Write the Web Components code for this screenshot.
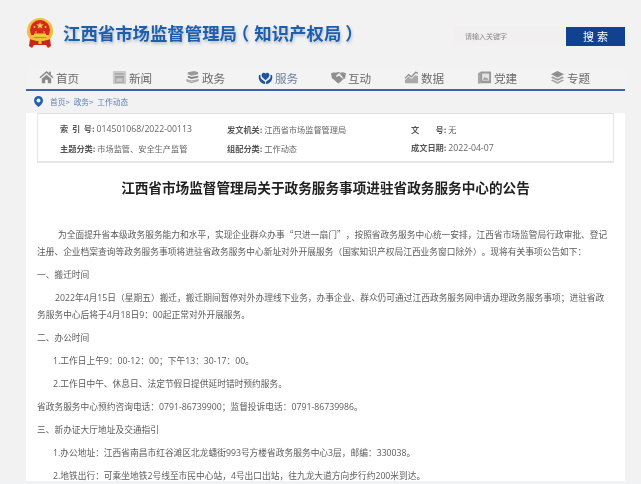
<!DOCTYPE html>
<html lang="zh-CN">
<head>
<meta charset="utf-8">
<title>江西省市场监督管理局</title>
<style>
  html, body { margin: 0; height: 484px; overflow: hidden; background: #eef3f8; }
  body { font-family: "Noto Sans CJK SC", "Liberation Sans", sans-serif; text-spacing-trim: space-all; }
  .cjk { font-family: "Noto Sans CJK SC", sans-serif; }
</style>
</head>
<body>
<site-page>
  <site-header></site-header>
  <site-nav>
    <nav-item label="首页" icon="home"></nav-item>
    <nav-item label="新闻" icon="news"></nav-item>
    <nav-item label="政务" icon="books"></nav-item>
    <nav-item label="服务" icon="care" active></nav-item>
    <nav-item label="互动" icon="hands"></nav-item>
    <nav-item label="数据" icon="chart"></nav-item>
    <nav-item label="党建" icon="album"></nav-item>
    <nav-item label="专题" icon="layers"></nav-item>
  </site-nav>
  <bread-crumb></bread-crumb>
  <article-card>
    <info-box></info-box>
    <h1>江西省市场监督管理局关于政务服务事项进驻省政务服务中心的公告</h1>
    <article-para indent="21">为全面提升省本级政务服务能力和水平，实现企业群众办事<span class="cjk">“只进一扇门”</span>，按照省政务服务中心统一安排，江西省市场监管局行政审批、登记<br>注册、企业档案查询等政务服务事项将进驻省政务服务中心新址对外开展服务（国家知识产权局江西业务窗口除外）。现将有关事项公告如下：</article-para>
    <article-para>一、搬迁时间</article-para>
    <article-para indent="18">2022年4月15日（星期五）搬迁，搬迁期间暂停对外办理线下业务，办事企业、群众仍可通过江西政务服务网申请办理政务服务事项；进驻省政<br>务服务中心后将于4月18日9：00起正常对外开展服务。</article-para>
    <article-para>二、办公时间</article-para>
    <article-para indent="16">1.工作日上午9：00-12：00；下午13：30-17：00。</article-para>
    <article-para indent="16">2.工作日中午、休息日、法定节假日提供延时错时预约服务。</article-para>
    <article-para>省政务服务中心预约咨询电话：0791-86739900；监督投诉电话：0791-86739986。</article-para>
    <article-para>三、新办证大厅地址及交通指引</article-para>
    <article-para indent="16">1.办公地址：江西省南昌市红谷滩区北龙蟠街993号方楼省政务服务中心3层，邮编：330038。</article-para>
    <article-para indent="16">2.地铁出行：可乘坐地铁2号线至市民中心站，4号出口出站，往九龙大道方向步行约200米到达。</article-para>
  </article-card>
</site-page>

<script>
const ICONS = {
  home: `<path fill="#8a8a8a" d="M8 1 .5 7.6l1 1.1L8 3.2l6.500 5.500 1-1.100L12.600 5V1.800h-2v1.500zM3 9.200V14h3.600v-3.600h2.800V14H13V9.200L8 5z"/>`,
  news: `<rect x="1" y="1" width="14" height="14" rx="1" fill="#cacaca"/><rect x="3" y="3.500" width="10" height="1.500" fill="#a2a2a2"/><path fill="none" stroke="#a2a2a2" stroke-width="1.200" d="M4 7h8v6H4z"/><rect x="4" y="7" width="8" height="1.800" fill="#a2a2a2"/>`,
  books: `<path fill="#9a9a9a" d="M3 2.500 10 1l4 1.500v2L7 6 3 4.500z"/><path fill="#7f7f7f" d="M3 6.200 7 7.500l7-1.500v2L7 9.500 3 8z"/><path fill="#a8a8a8" d="M1.500 9.500l5.500 1.700 7.500-1.700v2.200L7 14l-5.500-1.800z"/><path fill="#dcdcdc" d="M3 11l4 1.200 5-1-5 1.700z"/>`,
  care: `<path fill="#1f559f" d="M8 11 4.600 7.600C3 6 4 3 6.200 3 7 3 7.600 3.400 8 4c.4-.6 1-1 1.800-1C12 3 13 6 11.400 7.600z"/><path fill="#1f559f" d="M.8 6.200C.3 9.800 2 13 5 14.500c1 .5 2 .5 2.500.3v-2.400L4 9.800C2.800 8.800 2.500 7.200 2.600 5.200 1.700 5 1 5.400.800 6.200zM15.200 6.200c.5 3.600-1.200 6.800-4.200 8.300-1 .5-2 .5-2.500.3v-2.400L12 9.800c1.200-1 1.500-2.600 1.400-4.600.9-.2 1.600.2 1.800 1z"/>`,
  hands: `<path fill="#8f8f8f" d="M0 3.500 3.500 2.500l1 .5L8 2l2 .8L12.500 2.500 16 3.500l-1 5.500-1.500.4-5 4.600c-.8.500-1.500.2-1.800-.3L3 10 1 8.800z"/><path fill="#f2f2f2" d="M8 3.600 5.500 6c-.5.800.5 1.600 1.300 1.100L8.600 5.800l3.600 3.300.8-.7L9.400 3.800z"/>`,
  chart: `<path fill="#a9a9a9" d="M1 14V11l4-4 3 2.500 4-4 3 1V14z"/><path fill="none" stroke="#8a8a8a" stroke-width="1.300" d="M1 9l4-4 3 2.500L12.500 2.500 15 3.500"/>`,
  album: `<path fill="#a9a9a9" d="M1 3.200 4 2v12l-3 1z"/><rect x="3.500" y="1.500" width="11.500" height="12.500" rx=".6" fill="#9a9a9a"/><rect x="5.500" y="3.800" width="7.500" height="7.500" fill="#e4e4e4"/><path fill="#9a9a9a" d="M6.200 10.500 8.400 7.500l1.500 1.600 1-.8 1.400 2.200z"/>`,
  layers: `<path fill="#8f8f8f" d="M8 1 15 4.500 8 8 1 4.500z"/><path fill="#9c9c9c" d="M3 6.800 8 9.300l5-2.500 2 1.100-7 3.500-7-3.500z"/><path fill="#a8a8a8" d="M3 10.200 8 12.700l5-2.500 2 1.100-7 3.500-7-3.500z"/>`
};

const pageTemplate = document.createElement("template");
pageTemplate.innerHTML = `
  <style>
    :host { display: block; width: 641px; height: 481px; overflow: hidden; background: #f2f2f2; filter: blur(.35px); }
  </style>
  <slot></slot>
`;
class SitePage extends HTMLElement {
  constructor() {
    super();
    this.attachShadow({ mode: "open" }).appendChild(pageTemplate.content.cloneNode(true));
  }
}

const headerTemplate = document.createElement("template");
headerTemplate.innerHTML = `
  <style>
    :host { display: flex; align-items: center; justify-content: space-between; height: 66px; padding: 0 16px 0 27px; box-sizing: border-box; }
    .brand { display: flex; align-items: center; gap: 10px; }
    .brand svg { width: 26px; height: 30px; display: block; }
    .name { margin-bottom: 2px; font-size: 17.4px; font-weight: 700; color: #1d5fae; text-shadow: 1px 2px 3px rgba(30,60,110,.28); white-space: nowrap; }
    /* halt gives the parens half width, the margins put back the rest */
    .open { font-feature-settings: "halt"; margin: 0 5.200px 0 3.500px; }
    .close { font-feature-settings: "halt"; margin-left: 4px; }
    form { display: flex; gap: 1px; margin: 6px 0 0; }
    .box { width: 111px; height: 19px; padding-left: 11px; box-sizing: border-box; background: #f1efef; color: #8a8a8a; font-size: 7px; line-height: 19px; }
    button { width: 59px; height: 19px; padding: 0; border: 0; background: #10428f; color: #fff; font: 11px/19px "Noto Sans CJK SC", sans-serif; letter-spacing: 3px; text-indent: 3px; }
  </style>
  <div class="brand">
    <svg viewBox="0 0 26 30">
      <circle cx="13" cy="13" r="13" fill="#f0bf3c"/>
      <circle cx="13" cy="12" r="10" fill="#d8281e"/>
      <path fill="#f5cf4a" d="m13 4 1 2.600h2.700l-2.200 1.600.8 2.600L13 9.300l-2.300 1.500.8-2.600-2.200-1.600H12z"/>
      <circle cx="7.500" cy="9" r="1" fill="#f5cf4a"/><circle cx="18.500" cy="9" r="1" fill="#f5cf4a"/>
      <circle cx="9" cy="14" r=".8" fill="#f5cf4a"/><circle cx="17" cy="14" r=".8" fill="#f5cf4a"/>
      <path fill="#f3c63f" d="M5 17h16v2.500H5zM7 15.500h12V17H7z"/>
      <path fill="#c9261c" d="M3 21c3 2 17 2 20 0l1 7-3 2-2-3H7l-2 3-3-2z"/>
      <path fill="#f0bf3c" d="M6 20h14v1.500c-3 2-11 2-14 0zM11.500 23h3v3h-3z"/>
    </svg>
    <div class="name">江西省市场监督管理局<span class="open">（</span>知识产权局<span class="close">）</span></div>
  </div>
  <form>
    <div class="box">请输入关键字</div>
    <button type="button">搜索</button>
  </form>
`;
class SiteHeader extends HTMLElement {
  constructor() {
    super();
    this.attachShadow({ mode: "open" }).appendChild(headerTemplate.content.cloneNode(true));
  }
}

const navTemplate = document.createElement("template");
navTemplate.innerHTML = `
  <style>
    :host { display: grid; grid-template-columns: repeat(8, 73px); width: 599px; height: 25px; margin-left: 26px; padding-left: 13px; box-sizing: border-box; border-bottom: 2px solid #3a65a8; background: #f3f3f3; }
  </style>
  <slot></slot>
`;
class SiteNav extends HTMLElement {
  constructor() {
    super();
    this.attachShadow({ mode: "open" }).appendChild(navTemplate.content.cloneNode(true));
  }
}

const navItemTemplate = document.createElement("template");
navItemTemplate.innerHTML = `
  <style>
    :host { display: flex; align-items: center; gap: 2px; font-size: 11.600px; color: #6a6a6a; white-space: nowrap; }
    :host([active]) { color: #6e7f98; }
    svg { width: 15px; height: 15px; display: block; }
  </style>
  <svg viewBox="0 0 16 16"></svg><span></span>
`;
class NavItem extends HTMLElement {
  constructor() {
    super();
    const root = this.attachShadow({ mode: "open" });
    root.appendChild(navItemTemplate.content.cloneNode(true));
    root.querySelector("span").textContent = this.getAttribute("label");
    root.querySelector("svg").innerHTML = ICONS[this.getAttribute("icon")];
  }
}

const crumbTemplate = document.createElement("template");
crumbTemplate.innerHTML = `
  <style>
    :host { display: flex; align-items: center; height: 20px; margin: 0 0 2px 34px; font-size: 7.700px; color: #5f82b4; white-space: nowrap; }
    svg { width: 9px; height: 11px; margin-right: 7px; display: block; }
    span { margin-right: 4px; }
  </style>
  <svg viewBox="0 0 9 11"><path fill="#1f5fb0" fill-rule="evenodd" d="M4.500 0C2 0 0 2 0 4.400 0 7 2.500 9.500 4.500 11 6.500 9.500 9 7 9 4.400 9 2 7 0 4.500 0zm0 2.500a2 2 0 1 1 0 4 2 2 0 0 1 0-4z"/></svg>
  <span>首页&gt;</span><span>政务&gt;</span><span>工作动态</span>
`;
class BreadCrumb extends HTMLElement {
  constructor() {
    super();
    this.attachShadow({ mode: "open" }).appendChild(crumbTemplate.content.cloneNode(true));
  }
}

const cardTemplate = document.createElement("template");
cardTemplate.innerHTML = `
  <style>
    :host { display: block; width: 599px; height: 368px; margin-left: 26px; padding: 0 11px; box-sizing: border-box; background: #fff; overflow: hidden; }
    ::slotted(h1) { margin: 14px 0 29px; height: 20px; font-size: 13.630px; line-height: 20px; font-weight: 700; color: #222; text-align: center; white-space: nowrap; }
  </style>
  <slot></slot>
`;
class ArticleCard extends HTMLElement {
  constructor() {
    super();
    this.attachShadow({ mode: "open" }).appendChild(cardTemplate.content.cloneNode(true));
  }
}

const infoTemplate = document.createElement("template");
infoTemplate.innerHTML = `
  <style>
    :host { display: grid; grid-template-columns: 167px 184px 1fr; grid-auto-rows: 19px; align-items: center; height: 50px; padding: 5px 0 0 22px; box-sizing: border-box; border: 1px solid #e6e6e6; border-top-color: #e0e0e0; border-bottom-width: 2px; font-size: 8.200px; color: #666; white-space: nowrap; }
    b { color: #555; font-weight: 700; }
    .num { font-family: "Open Sans", "Noto Sans CJK SC", sans-serif; font-size: 8.700px; }
  </style>
  <div><b>索&nbsp; 引&nbsp; 号:</b> <span class="num">014501068/2022-00113</span></div>
  <div><b>发文机关:</b> 江西省市场监督管理局</div>
  <div><b>文&emsp;&emsp;号:</b> 无</div>
  <div><b>主题分类:</b> 市场监管、安全生产监管</div>
  <div><b>组配分类:</b> 工作动态</div>
  <div><b>成文日期:</b> <span class="num">2022-04-07</span></div>
`;
class InfoBox extends HTMLElement {
  constructor() {
    super();
    this.attachShadow({ mode: "open" }).appendChild(infoTemplate.content.cloneNode(true));
  }
}

const paraTemplate = document.createElement("template");
paraTemplate.innerHTML = `
  <style>
    :host { display: block; margin-bottom: 6px; font-family: "Open Sans", "Noto Sans CJK SC", sans-serif; font-size: 8.730px; line-height: 17px; color: #5c5c5c; white-space: nowrap; text-indent: var(--indent, 0); }
  </style>
  <slot></slot>
`;
class ArticlePara extends HTMLElement {
  constructor() {
    super();
    this.attachShadow({ mode: "open" }).appendChild(paraTemplate.content.cloneNode(true));
    if (this.hasAttribute("indent")) this.style.setProperty("--indent", `${this.getAttribute("indent")}px`);
  }
}

customElements.define("site-page", SitePage);
customElements.define("site-header", SiteHeader);
customElements.define("site-nav", SiteNav);
customElements.define("nav-item", NavItem);
customElements.define("bread-crumb", BreadCrumb);
customElements.define("article-card", ArticleCard);
customElements.define("info-box", InfoBox);
customElements.define("article-para", ArticlePara);
</script>
</body>
</html>
